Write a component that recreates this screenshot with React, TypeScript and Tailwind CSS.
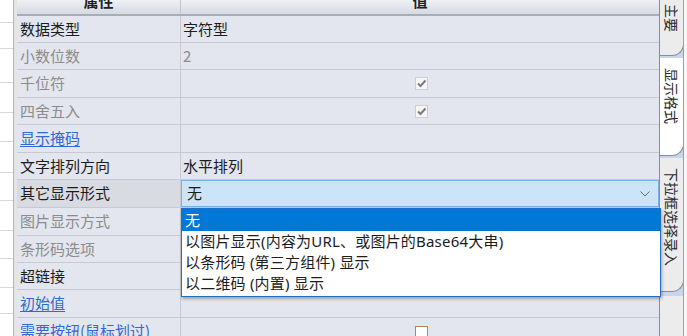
import React from "react";

type Row = {
  name: string;
  kind: "normal" | "gray" | "link";
  value?: string;
  valueGray?: boolean;
  check?: "gray" | "orange";
  combo?: boolean;
  h: number;
  sel?: boolean;
};

const rows: Row[] = [
  { name: "数据类型", kind: "normal", value: "字符型", h: 27 },
  { name: "小数位数", kind: "gray", value: "2", valueGray: true, h: 27 },
  { name: "千位符", kind: "gray", check: "gray", h: 28 },
  { name: "四舍五入", kind: "gray", check: "gray", h: 27 },
  { name: "显示掩码", kind: "link", h: 28 },
  { name: "文字排列方向", kind: "normal", value: "水平排列", h: 27 },
  { name: "其它显示形式", kind: "normal", combo: true, sel: true, h: 28 },
  { name: "图片显示方式", kind: "gray", h: 28 },
  { name: "条形码选项", kind: "gray", h: 27 },
  { name: "超链接", kind: "normal", h: 27 },
  { name: "初始值", kind: "link", h: 28 },
  { name: "需要按钮(鼠标划过)", kind: "link", check: "orange", h: 28 },
];

const leftLines = [22, 48, 82, 112, 141, 172, 200, 230, 258, 287, 313, 340];

function CheckBox({ kind }: { kind: "gray" | "orange" }) {
  if (kind === "orange") {
    return <div className="w-[13px] h-[13px] border border-[#b08a4e] bg-white" />;
  }
  return (
    <div className="w-[13px] h-[13px] border border-[#cfcfcf] bg-[#f6f6f6] flex items-center justify-center">
      <svg width="11" height="11" viewBox="0 0 11 11">
        <path d="M2 5.5 L4.5 8 L9.5 2.5" fill="none" stroke="#7c7c7c" strokeWidth="2" />
      </svg>
    </div>
  );
}

function Tab({ label, active, h, extra }: { label: string; active?: boolean; h: number; extra?: string }) {
  return (
    <div
      className={`w-[24px] shrink-0 border-r border-b border-[#8d8d8d] rounded-br-[12px] flex justify-center pt-[10px] ${
        active ? "bg-white" : "bg-[#ececec]"
      } ${extra ?? ""}`}
      style={{ height: h }}
    >
      <span className="[writing-mode:vertical-rl] [text-orientation:sideways] text-[14px] leading-[16px] text-[#2a2a2a]">
        {label}
      </span>
    </div>
  );
}

export default function App() {
  return (
    <div
      className="w-[687px] h-[336px] overflow-hidden flex bg-white relative"
      style={{ fontFamily: '"Noto Sans CJK SC", "Noto Sans", sans-serif' }}
    >
      {/* left strip */}
      <div className="w-[13px] h-full relative bg-white">
        {leftLines.map((y) => (
          <div key={y} className="absolute left-0 w-full h-px bg-[#d9d9d9]" style={{ top: y }} />
        ))}
      </div>
      <div className="w-px h-full bg-[#b3b3b3]" />
      <div className="w-[3px] h-full bg-[#e4e4e4]" />

      {/* table */}
      <div className="w-[642px] h-full flex flex-col relative">
        <div className="h-[16px] shrink-0 flex bg-gradient-to-b from-[#eef0f4] to-[#d6dae1] border-b-2 border-[#a8aeb8] overflow-hidden">
          <div className="w-[164px] border-r border-[#c2c6cd] flex justify-center">
            <span className="-mt-[9px] text-[15px] leading-[20px] font-bold text-[#222]">属性</span>
          </div>
          <div className="flex-1 flex justify-center">
            <span className="-mt-[9px] text-[15px] leading-[20px] font-bold text-[#222]">值</span>
          </div>
        </div>
        {rows.map((r, i) => (
          <div
            key={i}
            className="flex shrink-0 border-b border-[#c9cacf] bg-[#e3e6ee]"
            style={{ height: r.h }}
          >
            <div
              className={`w-[164px] shrink-0 border-r border-[#c9cacf] flex items-center pl-[3px] text-[15px] ${
                r.sel ? "bg-[#d8dbe2]" : ""
              } ${
                r.kind === "gray"
                  ? "text-[#8c8c8c]"
                  : r.kind === "link"
                  ? "text-[#3468d2] underline underline-offset-2"
                  : "text-[#1c1c1c]"
              }`}
            >
              {r.name}
            </div>
            <div className="flex-1 flex items-center text-[15px]">
              {r.value && (
                <span className={`pl-[2px] ${r.valueGray ? "text-[#8c8c8c]" : "text-[#1c1c1c]"}`}>{r.value}</span>
              )}
              {r.check && (
                <div className={`w-full flex justify-center pl-[2px] ${r.check === "orange" ? "self-start pt-[8px]" : ""}`}>
                  <CheckBox kind={r.check} />
                </div>
              )}
              {r.combo && (
                <div className="w-full h-full border border-[#7ab0e6] bg-[#cce4f7] flex items-center justify-between pl-[5px] pr-[8px] text-[#1c1c1c]">
                  <span>无</span>
                  <svg width="10" height="6" viewBox="0 0 10 6">
                    <path d="M0.5 0.5 L5 5 L9.5 0.5" fill="none" stroke="#6b6b6b" strokeWidth="1" />
                  </svg>
                </div>
              )}
            </div>
          </div>
        ))}

        {/* dropdown list */}
        <div
          className="absolute left-[164px] top-[208px] w-[480px] z-10 bg-white border border-[#1f6fc4] shadow-[1px_2px_3px_rgba(0,0,0,0.3)] flex flex-col pb-[2px]"
          style={{ fontFamily: '"Noto Sans", "Noto Sans CJK SC", sans-serif' }}
        >
          <div className="h-[22px] bg-[#0078d7] text-white text-[15px] flex items-center pl-[3px]">无</div>
          <div className="h-[21px] text-[15px] text-[#1c1c1c] flex items-center pl-[3px] whitespace-nowrap tracking-[0.2px]">
            以图片显示(内容为URL、或图片的Base64大串)
          </div>
          <div className="h-[21px] text-[15px] text-[#1c1c1c] flex items-center pl-[3px] whitespace-nowrap tracking-[0.2px]">
            以条形码 (第三方组件) 显示
          </div>
          <div className="h-[21px] text-[15px] text-[#1c1c1c] flex items-center pl-[3px] whitespace-nowrap tracking-[0.2px]">
            以二维码 (内置) 显示
          </div>
        </div>
      </div>

      {/* right tabs */}
      <div className="w-[28px] h-full flex bg-[#f4f4f4]">
        <div className="w-[24px] h-full border-l border-[#8d8d8d] bg-[#c8d5ee] flex flex-col gap-[2px]">
          <Tab label="主要" h={62} extra="-mt-[6px] !pt-[10px]" />
          <Tab label="显示格式" active h={98} />
          <Tab label="下拉框选择录入" h={134} />
          <Tab label="" h={60} extra="mt-[2px]" />
        </div>
        <div className="w-[4px] h-full border-l border-[#a0a0a0] bg-[#f7f7f7]" />
      </div>
    </div>
  );
}
